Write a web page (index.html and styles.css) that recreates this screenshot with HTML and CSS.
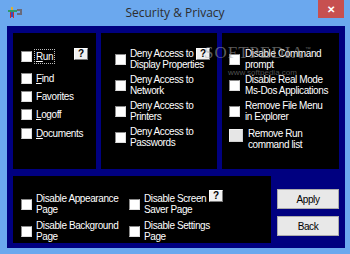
FILE: index.html
```html
<!doctype html>
<html lang="en">
<head>
    <meta charset="utf-8">
    <title>Security &amp; Privacy</title>
    <link rel="stylesheet" href="styles.css">
</head>
<body>
    <div class="window">
        <header class="titlebar">
            <svg class="app-icon" width="15" height="11" viewBox="0 0 15 11">
                <rect x="0" y="3" width="9" height="2" fill="#2f9a6a"/>
                <rect x="3" y="0" width="2" height="3" fill="#e0b030"/>
                <rect x="2" y="5" width="1" height="6" fill="#c83030"/>
                <rect x="5" y="5" width="1" height="6" fill="#c83030"/>
                <rect x="3" y="5" width="2" height="5" fill="#3050c0"/>
                <path d="M9 2h5v6h-5v-2h3v-2h-3z" fill="#6a6a7a"/>
            </svg>
            <span class="title">Security &amp; Privacy</span>
            <span class="close">&#x2715;</span>
        </header>

        <main class="client">
            <div class="top-row">
                <section class="panel list-basic">
                    <label class="opt opt-run"><span class="box"></span><span class="txt focus"><u>R</u>un</span></label>
                    <label class="opt"><span class="box"></span><span class="txt"><u>F</u>ind</span></label>
                    <label class="opt"><span class="box"></span><span class="txt">Favorites</span></label>
                    <label class="opt"><span class="box"></span><span class="txt"><u>L</u>ogoff</span></label>
                    <label class="opt opt-last"><span class="box"></span><span class="txt"><u>D</u>ocuments</span></label>
                    <span class="help help-basic">?</span>
                </section>

                <section class="panel list-two list-deny">
                    <label class="opt"><span class="box"></span><span class="txt">Deny Access to<br>Display Properties</span></label>
                    <label class="opt"><span class="box"></span><span class="txt">Deny Access to<br>Network</span></label>
                    <label class="opt"><span class="box"></span><span class="txt">Deny Access to<br>Printers</span></label>
                    <label class="opt"><span class="box"></span><span class="txt">Deny Access to<br>Passwords</span></label>
                    <span class="help help-deny">?</span>
                </section>

                <section class="panel list-two list-system">
                    <label class="opt"><span class="box"></span><span class="txt">Disable Command<br>prompt</span></label>
                    <label class="opt"><span class="box"></span><span class="txt">Disable Real Mode<br>Ms-Dos Applications</span></label>
                    <label class="opt"><span class="box"></span><span class="txt">Remove File Menu<br>in Explorer</span></label>
                    <label class="opt opt-plain"><span class="box box-plain"></span><span class="txt">Remove Run<br>command list</span></label>
                </section>
            </div>

            <div class="bottom-row">
                <section class="panel list-display">
                    <label class="opt"><span class="box"></span><span class="txt">Disable Appearance<br>Page</span></label>
                    <label class="opt"><span class="box"></span><span class="txt">Disable Screen<br>Saver Page</span></label>
                    <label class="opt"><span class="box"></span><span class="txt">Disable Background<br>Page</span></label>
                    <label class="opt"><span class="box"></span><span class="txt">Disable Settings<br>Page</span></label>
                    <span class="help help-display">?</span>
                </section>

                <div class="buttons">
                    <button class="btn">Apply</button>
                    <button class="btn">Back</button>
                </div>
            </div>

            <div class="watermark">SOFTPEDIA<sup>&#x2122;</sup></div>
            <div class="watermark-url">www.softpedia.com</div>
        </main>
    </div>
</body>
</html>
```

FILE: styles.css
```css
/* reset stuff */
html {
    box-sizing: border-box;
}

*, *:before, *:after {
    box-sizing: inherit;
}

body {
    margin: 0;
    font-family: "Liberation Sans", Arial, sans-serif;
}

/* window frame */
.window {
    width: 350px;
    height: 254px;
    background-color: #6ba8ee;
    display: flex;
    flex-direction: column;
    overflow: hidden;
}

.titlebar {
    height: 26px;
    display: grid;
    grid-template-columns: 1fr auto 1fr;
    align-items: start;
}

.app-icon {
    margin: 7px 0 0 8px;
}

.title {
    font-family: "Open Sans", sans-serif;
    font-size: 12px;
    line-height: 26px;
    color: #2d2d2d;
}

.close {
    justify-self: end;
    margin-right: 6px;
    width: 26px;
    height: 18px;
    background-color: #c75050;
    color: #fff;
    font-size: 10px;
    font-weight: bold;
    display: flex;
    align-items: center;
    justify-content: center;
}

/* client area */
.client {
    flex: 1;
    margin: 0 5px 6px 7px;
    padding: 7px 6px 5px;
    background-color: #000080;
    display: flex;
    flex-direction: column;
    gap: 7px;
    position: relative;
}

.top-row {
    height: 136px;
    display: grid;
    grid-template-columns: 83px 116px 117px;
    column-gap: 5px;
}

.bottom-row {
    height: 67px;
    display: flex;
    gap: 6px;
}

.panel {
    background-color: #000;
    color: #fff;
    position: relative;
}

/* checkbox rows */
.opt {
    display: flex;
    align-items: center;
    gap: 4px;
    font-size: 10px;
    letter-spacing: -0.4px;
    line-height: 11px;
    white-space: nowrap;
}

.box {
    flex: none;
    width: 11px;
    height: 11px;
    background-color: #fff;
    border: 1px solid;
    border-color: #8a8a8a #dedede #dedede #8a8a8a;
}

.box-plain {
    width: 14px;
    height: 13px;
    background-color: #e6e6e6;
    border-color: #f4f4f4 #cfcfcf #cfcfcf #f4f4f4;
    align-self: flex-start;
    margin-top: 1px;
}

.txt u {
    text-decoration-thickness: 1px;
    text-underline-offset: 1px;
}

.focus {
    outline: 1px dotted #bbb;
    outline-offset: 1px;
}

.list-basic {
    display: flex;
    flex-direction: column;
    gap: 7px;
    padding: 18px 0 0 8px;
}

.opt-run {
    margin-bottom: 4px;
}

.opt-last {
    margin-top: 1px;
}

.list-two {
    display: flex;
    flex-direction: column;
    gap: 4px;
    padding-top: 15px;
}

.list-deny {
    padding-left: 14px;
}

.list-system {
    padding-left: 7px;
}

.list-system .opt {
    gap: 5px;
}

.opt-plain {
    margin-top: 2px;
}

.list-display {
    width: 258px;
    display: grid;
    grid-template-columns: 108px auto;
    align-content: start;
    row-gap: 5px;
    padding: 17px 0 0 8px;
}

/* little help buttons */
.help {
    position: absolute;
    top: 15px;
    width: 14px;
    height: 12px;
    background-color: #f0f0f0;
    border: 1px solid;
    border-color: #fff #7a7a7a #7a7a7a #fff;
    color: #000;
    font-size: 10px;
    font-weight: bold;
    line-height: 10px;
    text-align: center;
}

.help-basic {
    left: 61px;
}

.help-deny {
    left: 95px;
}

.help-display {
    left: 196px;
    top: 14px;
}

/* buttons */
.buttons {
    flex: 1;
    display: flex;
    flex-direction: column;
    gap: 7px;
    padding-top: 13px;
}

.btn {
    height: 20px;
    margin: 0;
    padding: 0;
    background-color: #e8e8e8;
    border: 1px solid #acacac;
    color: #000;
    font-family: "Liberation Sans", Arial, sans-serif;
    font-size: 10px;
    letter-spacing: -0.4px;
}

/* screenshot watermark */
.watermark {
    position: absolute;
    left: 197px;
    top: 17px;
    font-family: "Liberation Serif", serif;
    font-size: 17px;
    letter-spacing: 1px;
    color: rgba(170, 170, 170, 0.55);
    pointer-events: none;
}

.watermark sup {
    font-size: 6px;
    font-family: "Liberation Sans", sans-serif;
}

.watermark-url {
    position: absolute;
    left: 221px;
    top: 42px;
    font-size: 8px;
    color: rgba(150, 150, 150, 0.55);
    pointer-events: none;
}
```
